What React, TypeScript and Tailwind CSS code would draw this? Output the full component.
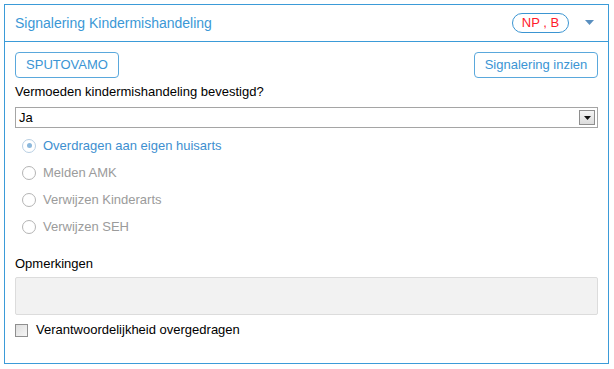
const OPTIONS = [
  { label: "Overdragen aan eigen huisarts", checked: true },
  { label: "Melden AMK", checked: false },
  { label: "Verwijzen Kinderarts", checked: false },
  { label: "Verwijzen SEH", checked: false },
];

function Radio({ checked }: { checked: boolean }) {
  return (
    <span
      className={`flex h-[14px] w-[14px] items-center justify-center rounded-full border ${
        checked ? "border-[#b8cfe3]" : "border-[#b4b4b4]"
      } bg-white`}
    >
      {checked && <span className="h-[5px] w-[5px] rounded-full bg-[#8cb8dc]" />}
    </span>
  );
}

export default function App() {
  return (
    <div className="min-h-[369px] bg-white p-1 font-['Liberation_Sans',Arial,sans-serif] text-[13px] text-black">
      <div className="flex h-[360px] w-[605px] flex-col border border-[#3b9bd8]">
        <div className="flex h-[37px] items-center border-b border-[#3b9bd8] pl-[10px] pr-[14px]">
          <span className="flex-1 text-[14px] text-[#3b98d6]">Signalering Kindermishandeling</span>
          <span className="flex h-[20px] w-[57px] items-center justify-center rounded-full border border-[#3b95d2] text-[13px] text-[#ff1a2a]">
            NP , B
          </span>
          <svg width="9" height="5" viewBox="0 0 9 5" className="mb-[2px] ml-[16px]">
            <path d="M0 0 H9 L4.5 5 Z" fill="#5a8fbf" />
          </svg>
        </div>

        <div className="flex flex-col px-[10px] pt-[10px]">
          <div className="flex items-center justify-between">
            <button className="h-[26px] w-[104px] rounded-[4px] border border-[#5aa8dc] text-[13px] text-[#3b95d4]">
              SPUTOVAMO
            </button>
            <button className="h-[26px] w-[124px] rounded-[4px] border border-[#5aa8dc] text-[13px] text-[#3b95d4]">
              Signalering inzien
            </button>
          </div>

          <div className="mt-[6px] h-[16px] leading-[16px]">Vermoeden kindermishandeling bevestigd?</div>

          <div className="mt-[7px] flex h-[21px] w-[583px] items-center border border-[#a5a5a5] pl-[3px] pr-[2px]">
            <span className="flex-1 leading-none">Ja</span>
            <span className="flex h-[15px] w-[16px] items-center justify-center border border-[#8e8e8e] bg-gradient-to-b from-[#f4f4f4] to-[#dcdcdc]">
              <svg width="7" height="4" viewBox="0 0 7 4">
                <path d="M0 0 H7 L3.5 4 Z" fill="#111" />
              </svg>
            </span>
          </div>

          <div className="mt-[4px] flex flex-col pl-[7px]">
            {OPTIONS.map((o) => (
              <div key={o.label} className="flex h-[27px] items-center gap-[7px]">
                <Radio checked={o.checked} />
                <span className={o.checked ? "text-[#3e8fd0]" : "text-[#9b9b9b]"}>{o.label}</span>
              </div>
            ))}
          </div>

          <div className="mt-[16px] h-[16px] leading-[16px]">Opmerkingen</div>
          <div className="mt-[5px] h-[38px] w-[583px] rounded-[2px] border border-[#dcdcdc] bg-[#f2f2f2]" />

          <div className="mt-[7px] flex items-center gap-[8px]">
            <span className="h-[13px] w-[13px] border border-[#8f8f8f] bg-gradient-to-br from-[#dedede] to-[#f6f6f6]" />
            <span className="leading-[16px]">Verantwoordelijkheid overgedragen</span>
          </div>
        </div>
      </div>
    </div>
  );
}
